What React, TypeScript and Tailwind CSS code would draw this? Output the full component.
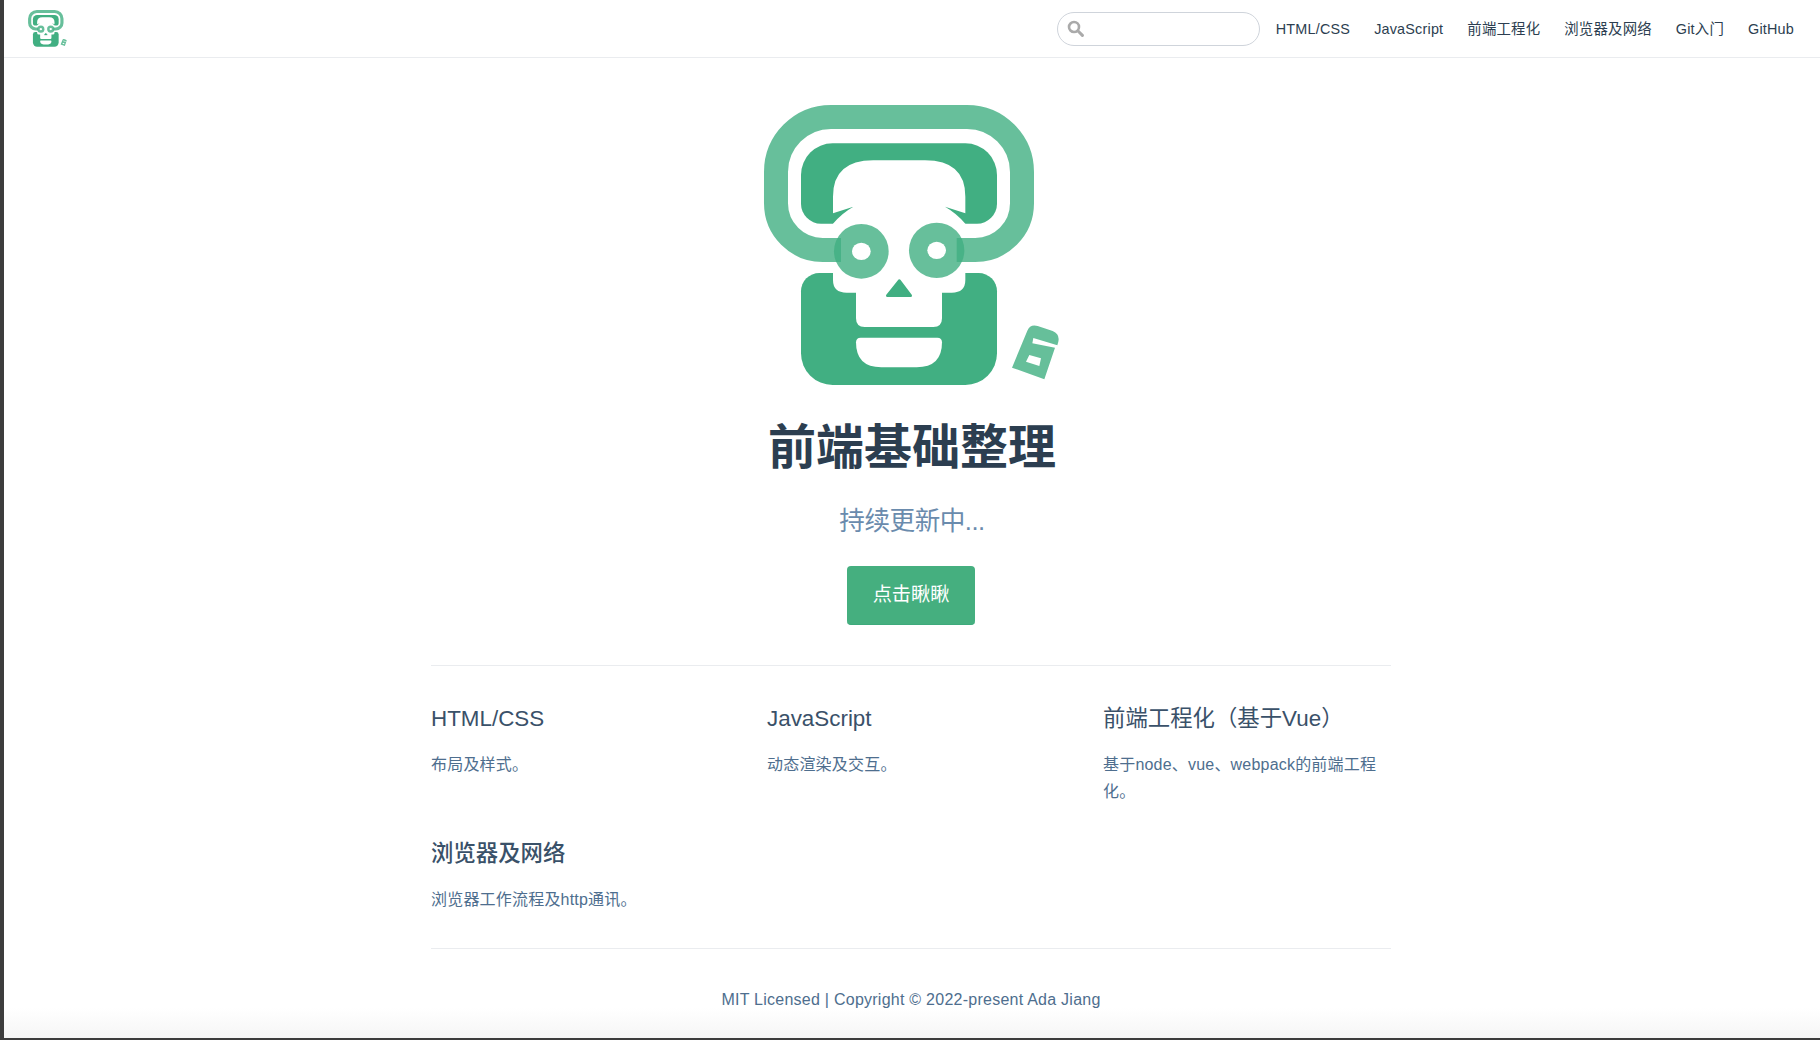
import React from 'react';

const features = [
  { title: 'HTML/CSS', text: '布局及样式。', weight: 'font-normal' },
  { title: 'JavaScript', text: '动态渲染及交互。', weight: 'font-normal' },
  { title: '前端工程化（基于Vue）', text: '基于node、vue、webpack的前端工程化。', weight: 'font-normal' },
  { title: '浏览器及网络', text: '浏览器工作流程及http通讯。', weight: 'font-medium' },
];

const navLinks = ['HTML/CSS', 'JavaScript', '前端工程化', '浏览器及网络', 'Git入门', 'GitHub'];

function Logo({ className }: { className: string }) {
  return (
    <svg viewBox="6 0 1020 960" className={className}>
      <path
        fill="#41af82"
        d="M278 160H676A95 95 0 0 1 771 255V341A60 60 0 0 1 711 401H243A60 60 0 0 1 183 341V255A95 95 0 0 1 278 160Z"
      />
      <path
        fill="#41af82"
        d="M238 549H716A55 55 0 0 1 771 604V790A95 95 0 0 1 676 885H278A95 95 0 0 1 183 790V604A55 55 0 0 1 238 549Z"
      />
      {/* skull */}
      <path
        fill="#fff"
        d="M279 370V320Q279 211 400 211H555Q676 211 676 320V370L615 350Q650 370 676 401V570Q676 608 635 608H606V685Q606 711 580 711H374Q348 711 348 685V608H320Q279 608 279 570V401Q305 370 340 350Z"
      />
      <path fill="#41af82" stroke="#41af82" strokeWidth="8" strokeLinejoin="round" d="M478 572L442 617H512Z" />
      <path fill="#fff" d="M362 743H592Q606 743 606 757Q606 832 530 832H424Q348 832 348 757Q348 743 362 743Z" />
      {/* ring and eyes overlap, so both stay translucent */}
      <path
        fill="none"
        stroke="#41af82"
        strokeOpacity="0.8"
        strokeWidth="72"
        d="M303 480H248A140 140 0 0 1 108 340V246A165 165 0 0 1 273 81H681A165 165 0 0 1 846 246V340A140 140 0 0 1 706 480H650"
      />
      <circle cx="364" cy="484" r="82" fill="#41af82" fillOpacity="0.8" />
      <circle cx="590" cy="481" r="83" fill="#41af82" fillOpacity="0.8" />
      <ellipse cx="364" cy="484" rx="28" ry="26" fill="#fff" />
      <ellipse cx="590" cy="481" rx="28" ry="26" fill="#fff" />
      {/* tilted 6 */}
      <path
        fill="#66bf9a"
        fillRule="evenodd"
        d="M816 833L862 722Q870 702 893 708L938 723Q960 732 955 755L952 766L880 744L877 760L945 773L913 868ZM868 795L903 805L898 828L858 815Z"
      />
    </svg>
  );
}

function SearchIcon() {
  return (
    <svg viewBox="0 0 17 17" className="w-[17px] h-[17px]">
      <circle cx="7" cy="7" r="5" fill="none" stroke="#aaaaaa" strokeWidth="2.6" />
      <path d="M10.8 10.8L15.4 15.4" stroke="#aaaaaa" strokeWidth="3" strokeLinecap="round" />
    </svg>
  );
}

function Navbar() {
  return (
    <header className="h-[58px] shrink-0 flex items-center justify-between pl-[21px] pr-[26px] border-b border-[#eaecef]">
      <Logo className="w-[45px] h-[42px]" />
      <div className="flex items-center">
        <div className="w-[203px] h-[34px] mr-4 flex items-center pl-[9px] rounded-full border border-[#cfd4db]">
          <SearchIcon />
        </div>
        <nav className="flex gap-6 pt-[2px] text-[14.4px] tracking-[0.2px] text-[#2c3e50]">
          {navLinks.map((link) => (
            <a key={link}>{link}</a>
          ))}
        </nav>
      </div>
    </header>
  );
}

export default function App() {
  return (
    <div className="h-screen overflow-hidden bg-[#3d3d3d] pl-1 pb-[2px] font-['Liberation_Sans','Noto_Sans_CJK_SC',sans-serif]">
      <div className="relative h-full bg-white flex flex-col">
        <Navbar />
        <main className="flex flex-col items-center pr-[2px]">
          <Logo className="mt-[32px] ml-[2px] w-[340px] h-[320px]" />
          <h1 className="mt-[12px] ml-[2px] text-[48px] leading-[1.1] font-semibold text-[#2c3e50]">前端基础整理</h1>
          <p className="mt-[30px] ml-[2px] text-[25.6px] leading-[1.3] tracking-[-0.5px] text-[#6a8bad]">持续更新中...</p>
          <a className="mt-[28px] w-[128px] h-[59px] flex items-center justify-center rounded bg-[#45af7f] border-b border-[#3eaa7c] text-[19.2px] text-white">
            点击瞅瞅
          </a>
          <div className="mt-[40px] w-[960px] border-t border-[#eaecef] pt-[30px] pb-[8px] grid grid-cols-[288px_288px_288px] gap-x-[48px]">
            {features.map((f) => (
              <div key={f.title} className="pb-[26px]">
                <h2 className={`mt-[9px] text-[22.4px] leading-[1.25] text-[#3a5169] ${f.weight}`}>{f.title}</h2>
                <p className="mt-[18px] text-base leading-[1.7] tracking-[0.2px] text-[#4e6e8e]">{f.text}</p>
              </div>
            ))}
          </div>
          <div className="w-[960px] border-t border-[#eaecef] pt-[37px] text-center text-base leading-[1.7] tracking-[0.25px] text-[#4e6e8e]">
            MIT Licensed | Copyright © 2022-present Ada Jiang
          </div>
        </main>
        <div className="absolute bottom-0 inset-x-0 h-[30px] bg-gradient-to-b from-[#f6f6f6]/0 to-[#f6f6f6]" />
      </div>
    </div>
  );
}
